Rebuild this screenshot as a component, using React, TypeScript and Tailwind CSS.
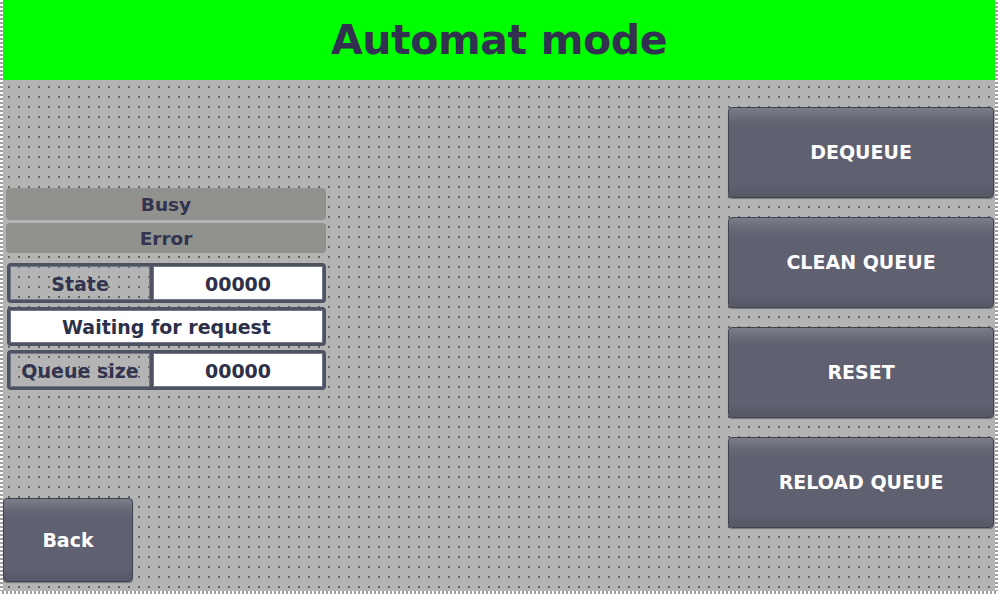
import React from "react";

const font = { fontFamily: '"DejaVu Sans", Verdana, sans-serif' };

const dots =
  "bg-[#b4b4b4] bg-[radial-gradient(circle,#666666_1px,transparent_1px)] bg-[length:10px_10px] bg-[position:1px_2px]";

function HmiButton({ label, className }: { label: string; className: string }) {
  return (
    <button
      className={`${className} flex items-center justify-center rounded-[4px] border border-[#3f4350] bg-[linear-gradient(to_bottom,#7b7d8a_0px,#666775_12px,#5f6070_20px,#5f6070_85%,#565866_100%)] text-[19px] font-bold text-white shadow-[0_1px_1px_rgba(0,0,0,0.35)]`}
    >
      {label}
    </button>
  );
}

function StatusBar({ label, className }: { label: string; className: string }) {
  return (
    <div
      className={`${className} flex w-[320px] items-center justify-center rounded-[4px] bg-[#91928e] pt-[2px] text-[18.5px] font-bold text-[#33344f]`}
    >
      {label}
    </div>
  );
}

function ValueRow({ label, value }: { label: string; value: string }) {
  return (
    <div className="ml-[1px] flex h-[40px] w-[319px] rounded-[4px] border-[3px] border-[#4f5361]">
      <div className="flex w-[140px] items-center justify-center border border-[#72768a] pt-[2px] text-[19px] font-bold text-[#33344f]">
        {label}
      </div>
      <div className="w-[3px] bg-[#4f5361]" />
      <div className="flex flex-1 items-center justify-center border border-[#72768a] bg-white pt-[2px] text-[19px] font-bold text-[#2d3048]">
        {value}
      </div>
    </div>
  );
}

export default function App() {
  return (
    <div style={font} className="flex h-[594px] w-[998px] flex-col overflow-hidden bg-[#b4b4b4]">
      <div className="flex flex-1">
        <div className="w-[3px] bg-[repeating-linear-gradient(to_bottom,#ffffff_0px,#ffffff_2px,#a0a0a0_2px,#a0a0a0_4px)]" />

        <div className="flex flex-1 flex-col">
          <header className="flex h-[80px] items-center justify-center bg-[#00ff00]">
            <h1 className="pt-[1px] text-[41px] font-bold tracking-[-0.4px] text-[#323250]">Automat mode</h1>
          </header>

          <main className={`flex flex-1 justify-between ${dots}`}>
            <section className="flex flex-col">
              <div className="flex flex-col pl-[3px] pt-[108px]">
                <StatusBar label="Busy" className="h-[32px]" />
                <StatusBar label="Error" className="mt-[3px] h-[30px]" />
                <div className="mt-[10px] flex flex-col gap-[4px]">
                  <ValueRow label="State" value="00000" />
                  <div className="ml-[1px] flex h-[39px] w-[319px] rounded-[4px] border-[3px] border-[#4f5361]">
                    <div className="flex flex-1 items-center justify-center border border-[#72768a] bg-white pt-[2px] text-[19px] font-bold text-[#2d3048]">
                      Waiting for request
                    </div>
                  </div>
                  <ValueRow label="Queue size" value="00000" />
                </div>
              </div>
              <div className="mt-auto mb-[9px]">
                <HmiButton label="Back" className="h-[84px] w-[130px]" />
              </div>
            </section>

            <section className="mr-[1px] flex flex-col gap-[19px] pt-[27px]">
              <HmiButton label="DEQUEUE" className="h-[91px] w-[266px]" />
              <HmiButton label="CLEAN QUEUE" className="h-[91px] w-[266px]" />
              <HmiButton label="RESET" className="h-[91px] w-[266px]" />
              <HmiButton label="RELOAD QUEUE" className="h-[91px] w-[266px]" />
            </section>
          </main>
        </div>

        <div className="w-[3px] bg-[repeating-linear-gradient(to_bottom,#ffffff_0px,#ffffff_2px,#a0a0a0_2px,#a0a0a0_4px)]" />
      </div>
      <div className="h-[3px] bg-[repeating-linear-gradient(to_right,#ffffff_0px,#ffffff_2px,#a0a0a0_2px,#a0a0a0_4px)]" />
    </div>
  );
}
